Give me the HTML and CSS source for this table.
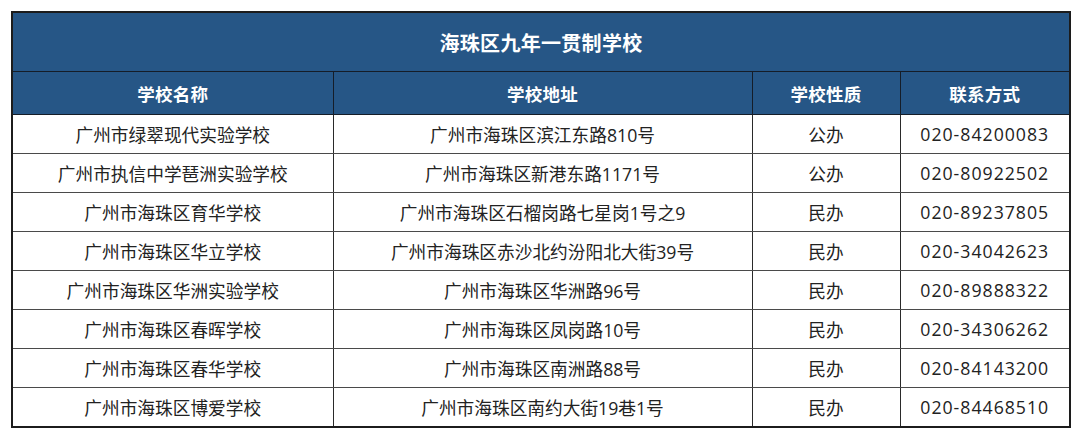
FILE: index.html
```html
<!DOCTYPE html>
<html lang="zh">
<head>
<meta charset="utf-8">
<title>海珠区九年一贯制学校</title>
<link rel="stylesheet" href="styles.css">
</head>
<body>
<table class="schools">
  <colgroup>
    <col class="c-name">
    <col class="c-addr">
    <col class="c-type">
    <col class="c-tel">
  </colgroup>
  <thead>
    <tr class="title-row"><th colspan="4">海珠区九年一贯制学校</th></tr>
    <tr class="head-row"><th>学校名称</th><th>学校地址</th><th>学校性质</th><th>联系方式</th></tr>
  </thead>
  <tbody>
    <tr><td>广州市绿翠现代实验学校</td><td>广州市海珠区滨江东路810号</td><td>公办</td><td class="tel">020-84200083</td></tr>
    <tr><td>广州市执信中学琶洲实验学校</td><td>广州市海珠区新港东路1171号</td><td>公办</td><td class="tel">020-80922502</td></tr>
    <tr><td>广州市海珠区育华学校</td><td>广州市海珠区石榴岗路七星岗1号之9</td><td>民办</td><td class="tel">020-89237805</td></tr>
    <tr><td>广州市海珠区华立学校</td><td>广州市海珠区赤沙北约汾阳北大街39号</td><td>民办</td><td class="tel">020-34042623</td></tr>
    <tr><td>广州市海珠区华洲实验学校</td><td>广州市海珠区华洲路96号</td><td>民办</td><td class="tel">020-89888322</td></tr>
    <tr><td>广州市海珠区春晖学校</td><td>广州市海珠区凤岗路10号</td><td>民办</td><td class="tel">020-34306262</td></tr>
    <tr><td>广州市海珠区春华学校</td><td>广州市海珠区南洲路88号</td><td>民办</td><td class="tel">020-84143200</td></tr>
    <tr><td>广州市海珠区博爱学校</td><td>广州市海珠区南约大街19巷1号</td><td>民办</td><td class="tel">020-84468510</td></tr>
  </tbody>
</table>
</body>
</html>
```
FILE: styles.css
```css
html, body {
  margin: 0;
  padding: 0;
  background: #ffffff;
}
body {
  padding: 11px 0 0 11px;
  font-family: "Open Sans", "Noto Sans CJK SC", sans-serif;
  color: #222222;
}
.schools {
  border-collapse: collapse;
  table-layout: fixed;
  width: 1058px;
  border: 2px solid #1c1c1c;
}
.c-name { width: 321px; }
.c-addr { width: 419px; }
.c-type { width: 148px; }
.c-tel { width: 170px; }
.schools th,
.schools td {
  padding: 0;
  text-align: center;
  vertical-align: middle;
  white-space: nowrap;
}
.schools th {
  background: #265686;
  color: #ffffff;
  font-weight: 700;
  font-family: "Noto Sans CJK SC", sans-serif;
  border: 1.5px solid #151d28;
}
.title-row th {
  height: 58px;
  font-size: 20px;
  letter-spacing: 0.3px;
}
.head-row th {
  height: 42px;
  font-size: 17.5px;
  letter-spacing: 0.3px;
}
.schools td {
  height: 38px;
  font-size: 17.7px;
  border-top: 1.5px solid #4a4a4a;
  border-bottom: 1.5px solid #4a4a4a;
  border-left: 1.5px solid #2a2a2a;
  border-right: 1.5px solid #2a2a2a;
}
.schools td.tel {
  letter-spacing: 1px;
}
```
